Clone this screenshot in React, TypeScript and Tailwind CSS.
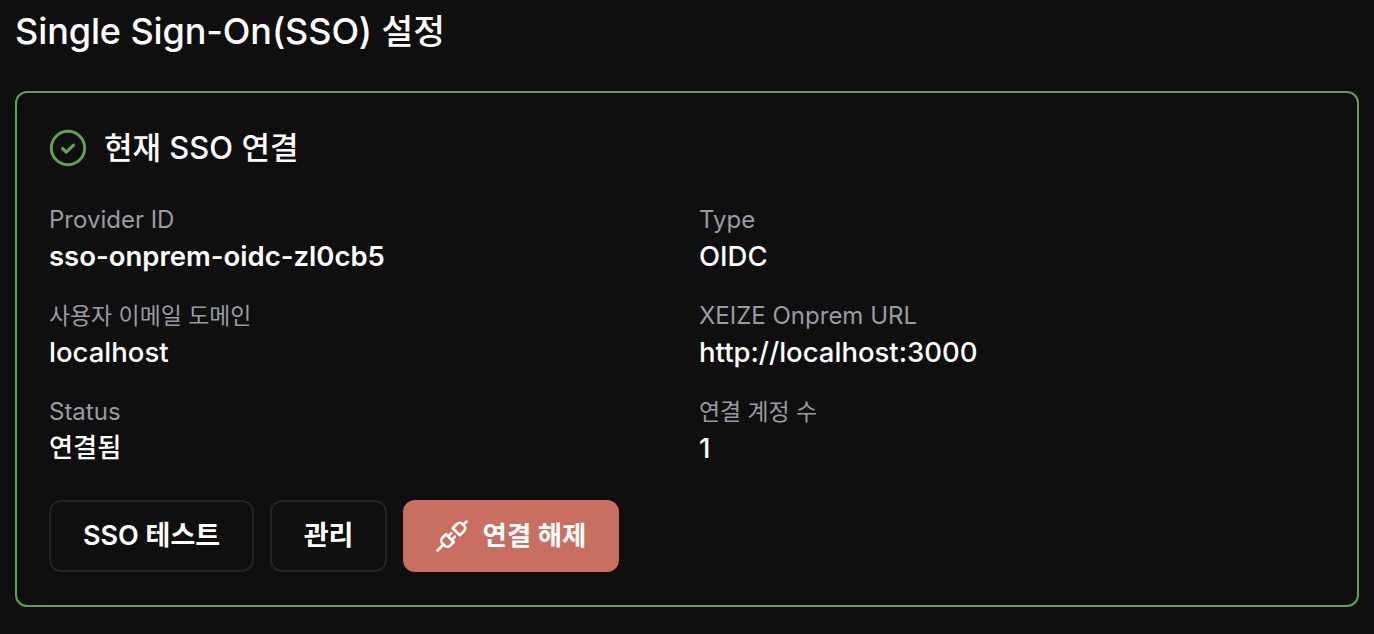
import React from 'react';

const font = { fontFamily: 'Inter, "Noto Sans CJK KR", sans-serif' };

const fields = [
  { label: 'Provider ID', value: 'sso-onprem-oidc-zl0cb5', strong: true },
  { label: 'Type', value: 'OIDC' },
  { label: '사용자 이메일 도메인', value: 'localhost', koLabel: true },
  { label: 'XEIZE Onprem URL', value: 'http://localhost:3000' },
  { label: 'Status', value: '연결됨', koValue: true },
  { label: '연결 계정 수', value: '1', koLabel: true },
];

const CheckIcon = () => (
  <svg width="38" height="38" viewBox="0 0 38 38" fill="none" stroke="#639f55" strokeLinecap="round" strokeLinejoin="round" className="shrink-0">
    <circle cx="19" cy="19" r="16.7" strokeWidth="3" />
    <path d="M13.5 19.5l3.8 3.6 7.2-7" strokeWidth="3.2" />
  </svg>
);

const UnplugIcon = () => (
  <svg width="32" height="32" viewBox="0 0 32 32" fill="none" stroke="#fff" strokeWidth="2.6" strokeLinecap="round" strokeLinejoin="round" className="shrink-0">
    <g transform="translate(16 16) rotate(45)">
      <path d="M0 -20.5V-16" />
      <path d="M-5 -6V-12a4 4 0 0 1 4-4h2a4 4 0 0 1 4 4v6z" />
      <path d="M-2.5 3V-1.5M2.5 3V-1.5" />
      <path d="M-5.5 3h11v5a4 4 0 0 1-4 4h-3a4 4 0 0 1-4-4z" />
      <path d="M0 12V20.5" />
    </g>
  </svg>
);

export default function App() {
  return (
    <div className="min-h-[634px] bg-[#0f0f0f] px-[15px] pt-[10px] text-white" style={font}>
      <h1 className="text-[36px] leading-[42px] font-medium tracking-[-0.1px]">
        Single Sign-On(SSO) <span className="text-[34.5px]">설정</span>
      </h1>

      <div className="mt-[38px] h-[516px] rounded-[12px] border-2 border-[#639f55] px-[32px] pt-[35px]">
        <div className="flex items-center gap-[17px] h-[40px]">
          <CheckIcon />
          <h2 className="text-[31px] font-medium leading-[40px]">현재 SSO 연결</h2>
        </div>

        <div className="mt-[33px] grid grid-cols-2 gap-x-[24px] gap-y-[20px]">
          {fields.map((f) => (
            <div key={f.label} className="h-[76px]">
              <div className={`${f.koLabel ? 'text-[22.9px]' : 'text-[24px]'} leading-[38px] text-[#9b9ba3]`}>{f.label}</div>
              <div className={`${f.koValue ? 'text-[26.2px]' : 'text-[27.5px]'} leading-[34px] ${f.strong ? 'font-semibold' : 'font-medium'}`}>{f.value}</div>
            </div>
          ))}
        </div>

        <div className="mt-[31px] flex gap-[16px]">
          <button className="h-[72px] w-[205px] rounded-[12px] border-2 border-[#242424] text-[27px] font-semibold">SSO 테스트</button>
          <button className="h-[72px] w-[117px] rounded-[12px] border-2 border-[#242424] text-[27px] font-semibold">관리</button>
          <button className="flex h-[72px] w-[216px] items-center justify-center gap-[15px] rounded-[12px] bg-[#c96f62] text-[26.4px] font-semibold">
            <UnplugIcon />
            연결 해제
          </button>
        </div>
      </div>
    </div>
  );
}
